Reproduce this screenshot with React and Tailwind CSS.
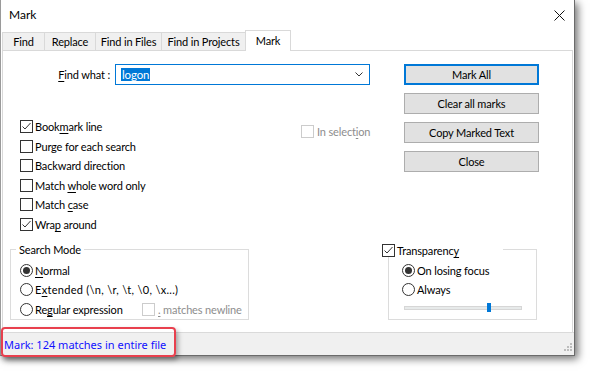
import React from "react";

function Check({ checked = false, disabled = false }) {
  return (
    <span
      className={
        disabled
          ? "relative block w-[13px] h-[13px] shrink-0 border border-[#cccccc] bg-white"
          : "relative block w-[13px] h-[13px] shrink-0 border border-[#333333] bg-white"
      }
    >
      {checked && (
        <svg className="absolute left-0 top-0" width="11" height="11" viewBox="0 0 11 11">
          <path d="M1.5 5.5 L4 8 L9.5 2" fill="none" stroke="#333333" strokeWidth="1" />
        </svg>
      )}
    </span>
  );
}

function Radio({ checked = false }) {
  return (
    <span className="flex w-[13px] h-[13px] shrink-0 items-center justify-center rounded-full border border-[#333333] bg-white">
      {checked && <span className="block w-[7px] h-[7px] rounded-full bg-[#333333]" />}
    </span>
  );
}

function U({ children }) {
  return <span className="underline underline-offset-[2px] decoration-1">{children}</span>;
}

function CheckRow({ checked, children }) {
  return (
    <div className="flex h-[19.5px] items-center">
      <Check checked={checked} />
      <span className="ml-[2px] whitespace-nowrap leading-none">{children}</span>
    </div>
  );
}

function RadioRow({ checked, children }) {
  return (
    <div className="flex h-[19.5px] items-center">
      <Radio checked={checked} />
      <span className="ml-[2px] whitespace-nowrap leading-none">{children}</span>
    </div>
  );
}

function Button({ def = false, children }) {
  return (
    <div
      className={
        def
          ? "flex h-[21px] w-[135px] items-center justify-center border-2 border-[#0078d7] bg-[#e1e1e1] leading-none"
          : "flex h-[21px] w-[135px] items-center justify-center border border-[#adadad] bg-[#e1e1e1] leading-none"
      }
    >
      {children}
    </div>
  );
}

export default function App() {
  return (
    <div className="relative w-[591px] h-[373px] overflow-hidden bg-white font-['Lato',sans-serif] text-[11px] tracking-[-0.15px] text-black">
      {/* Window */}
      <div className="flex w-[575px] h-[356px] flex-col border-l border-r border-b border-l-[#9a9a9a] border-r-[#6b6b6b] border-b-[#6b6b6b] bg-white shadow-[3px_3px_8px_rgba(0,0,0,0.55)]">
        {/* Title bar */}
        <div className="flex h-[30px] items-center justify-between pl-[8px] pr-[9px]">
          <span className="text-[12px] tracking-normal leading-none">Mark</span>
          <svg width="11" height="11" viewBox="0 0 11 11">
            <path d="M0.5 0.5 L10.5 10.5 M10.5 0.5 L0.5 10.5" stroke="#111111" strokeWidth="1" />
          </svg>
        </div>

        {/* Tabs */}
        <div className="flex h-[20px] items-end pl-[1px]">
          <div className="flex h-[18px] w-[43px] items-center justify-center border border-b-0 border-[#d9d9d9] bg-[#f0f0f0] leading-none">Find</div>
          <div className="-ml-[1px] flex h-[18px] w-[52px] items-center justify-center border border-b-0 border-[#d9d9d9] bg-[#f0f0f0] leading-none">Replace</div>
          <div className="-ml-[1px] flex h-[18px] w-[67px] items-center justify-center border border-b-0 border-[#d9d9d9] bg-[#f0f0f0] leading-none">Find in Files</div>
          <div className="-ml-[1px] flex h-[18px] w-[85px] items-center justify-center border border-b-0 border-[#d9d9d9] bg-[#f0f0f0] leading-none">Find in Projects</div>
          <div className="relative z-10 -mb-[1px] -ml-[1px] flex h-[21px] w-[46px] items-center justify-center border border-b-0 border-[#d9d9d9] bg-white pb-[1px] leading-none">Mark</div>
        </div>

        {/* Panel */}
        <div className="ml-[1px] flex h-[282px] w-[571px] flex-col border border-b-0 border-[#d9d9d9] bg-white">
          {/* Top section */}
          <div className="flex">
            <div className="w-[401px]">
              {/* Find what */}
              <div className="mt-[13px] flex h-[21px] items-center">
                <div className="w-[107px] text-right leading-none">
                  <U>F</U>ind what :
                </div>
                <div className="ml-[5px] flex h-[21px] w-[255px] items-center justify-between border border-[#0078d7] pl-[5px] pr-[6px]">
                  <span className="bg-[#0078d7] px-[1px] text-[11.5px] text-white leading-[13px]">logon</span>
                  <svg width="8" height="5" viewBox="0 0 8 5">
                    <path d="M0.5 0.5 L4 4 L7.5 0.5" fill="none" stroke="#333333" strokeWidth="1" />
                  </svg>
                </div>
              </div>

              {/* Options */}
              <div className="mt-[32px] flex">
                <div className="w-[298px] pl-[17px]">
                  <CheckRow checked>
                    Book<U>m</U>ark line
                  </CheckRow>
                  <CheckRow>Purge for each search</CheckRow>
                  <CheckRow>Backward direction</CheckRow>
                  <CheckRow>
                    Match <U>w</U>hole word only
                  </CheckRow>
                  <CheckRow>
                    Match <U>c</U>ase
                  </CheckRow>
                  <CheckRow checked>
                    Wra<U>p</U> around
                  </CheckRow>
                </div>
                <div className="mt-[4.5px] flex h-[19.5px] items-center text-[#8d8d8d]">
                  <Check disabled />
                  <span className="ml-[3px] whitespace-nowrap leading-none">
                    In select<U>i</U>on
                  </span>
                </div>
              </div>
            </div>

            {/* Buttons */}
            <div className="flex flex-col gap-[8px] pt-[13px]">
              <Button def>Mark All</Button>
              <Button>Clear all marks</Button>
              <Button>Copy Marked Text</Button>
              <Button>Close</Button>
            </div>
          </div>

          {/* Bottom section */}
          <div className="mt-[15px] flex">
            {/* Search Mode */}
            <div className="relative ml-[7px] h-[71px] w-[239px] border border-[#dcdcdc] pl-[9px] pt-[10.5px]">
              <div className="absolute left-[5px] top-[-6px] bg-white px-[3px] leading-none">Search Mode</div>
              <RadioRow checked>
                <U>N</U>ormal
              </RadioRow>
              <div className="flex h-[19.5px] items-center">
                <Radio />
                <span className="ml-[2px] whitespace-nowrap leading-none tracking-[0.3px]">
                  E<U>x</U>tended (\n, \r, \t, \0, \x...)
                </span>
              </div>
              <div className="flex h-[19.5px] items-center">
                <div className="flex w-[122px] items-center">
                  <Radio />
                  <span className="ml-[2px] whitespace-nowrap leading-none">
                    Re<U>g</U>ular expression
                  </span>
                </div>
                <Check disabled />
                <span className="ml-[3px] whitespace-nowrap leading-none text-[#8d8d8d]">
                  <U>.</U> matches newline
                </span>
              </div>
            </div>

            {/* Transparency */}
            <div className="relative ml-[139px] h-[71px] w-[149px] border border-[#dcdcdc] pl-[13px] pt-[10.5px]">
              <div className="absolute left-[-7px] top-[-6px] flex h-[13px] w-[121px] items-center bg-white">
                <Check checked />
                <span className="ml-[2px] whitespace-nowrap leading-none">
                  Transparenc<U>y</U>
                </span>
              </div>
              <RadioRow checked>On losing focus</RadioRow>
              <RadioRow>Always</RadioRow>
              <div className="relative ml-[2px] mt-[6px] h-[4px] w-[118px] border border-[#d6d6d6] bg-[#e7eaea]">
                <div className="absolute left-[82px] top-[-4px] h-[9px] w-[4px] bg-[#0078d7]" />
              </div>
            </div>
          </div>
        </div>

        {/* Status bar */}
        <div className="flex h-[23px] items-center justify-between border-t border-[#dadada] bg-[#f0f0f0] pl-[3px] pr-[2px]">
          <span className="font-['Noto_Sans',sans-serif] text-[11px] tracking-normal leading-none text-[#1010ff]">Mark: 124 matches in entire file</span>
          <svg className="mt-[6px]" width="8" height="8" viewBox="0 0 8 8">
            <rect x="6" y="0" width="2" height="2" fill="#bdbdbd" />
            <rect x="3" y="3" width="2" height="2" fill="#bdbdbd" />
            <rect x="6" y="3" width="2" height="2" fill="#bdbdbd" />
            <rect x="0" y="6" width="2" height="2" fill="#bdbdbd" />
            <rect x="3" y="6" width="2" height="2" fill="#bdbdbd" />
            <rect x="6" y="6" width="2" height="2" fill="#bdbdbd" />
          </svg>
        </div>
      </div>

      {/* Red annotation */}
      <div className="absolute left-[1px] top-[327px] h-[30px] w-[175px] rounded-[4px] border-[2.5px] border-[#e8404e] shadow-[2px_3px_5px_rgba(0,0,0,0.35)]" />
    </div>
  );
}
